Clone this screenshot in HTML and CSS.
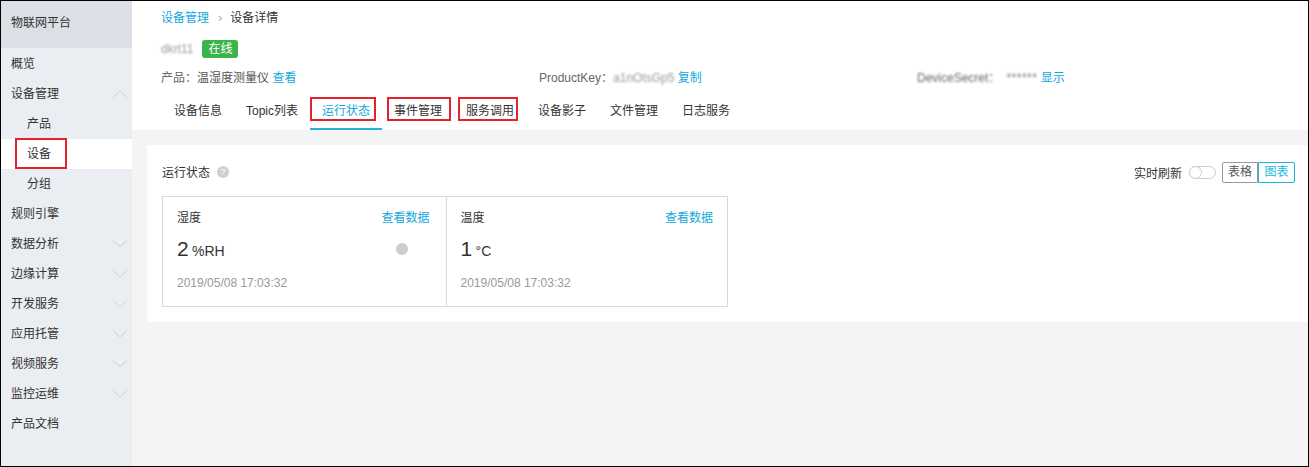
FILE: index.html
```html
<!DOCTYPE html>
<html lang="zh">
<head>
<meta charset="utf-8">
<title>设备详情</title>
<link rel="stylesheet" href="styles.css">
</head>
<body>
<aside class="sidebar">
  <div class="side-head">物联网平台</div>
  <ul class="menu">
    <li class="item">概览</li>
    <li class="item">设备管理<svg class="chev" viewBox="0 0 16 8"><polyline points="1,7.5 8,1 15,7.5"/></svg></li>
    <li class="item sub">产品</li>
    <li class="item sub active">设备<span class="mark mark-side"></span></li>
    <li class="item sub">分组</li>
    <li class="item">规则引擎</li>
    <li class="item">数据分析<svg class="chev" viewBox="0 0 16 8"><polyline points="1,0.5 8,7 15,0.5"/></svg></li>
    <li class="item">边缘计算<svg class="chev" viewBox="0 0 16 8"><polyline points="1,0.5 8,7 15,0.5"/></svg></li>
    <li class="item">开发服务<svg class="chev" viewBox="0 0 16 8"><polyline points="1,0.5 8,7 15,0.5"/></svg></li>
    <li class="item">应用托管<svg class="chev" viewBox="0 0 16 8"><polyline points="1,0.5 8,7 15,0.5"/></svg></li>
    <li class="item">视频服务<svg class="chev" viewBox="0 0 16 8"><polyline points="1,0.5 8,7 15,0.5"/></svg></li>
    <li class="item">监控运维<svg class="chev" viewBox="0 0 16 8"><polyline points="1,0.5 8,7 15,0.5"/></svg></li>
    <li class="item">产品文档</li>
  </ul>
</aside>
<main class="main">
  <header class="head">
    <div class="crumb"><span class="link">设备管理</span><span class="sep">›</span><span>设备详情</span></div>
    <div class="name-row"><span class="blur name">dkrt11</span><span class="badge">在线</span></div>
    <div class="info-row">
      <div><span class="label">产品：</span><span class="val">温湿度测量仪</span> <span class="link">查看</span></div>
      <div><span class="label">ProductKey：</span><span class="blur val">a1nOtsGp5</span> <span class="link">复制</span></div>
      <div><span class="blur label">DeviceSecret：</span><span class="blur stars">******</span> <span class="link">显示</span></div>
    </div>
    <nav class="tabs">
      <span class="tab">设备信息</span>
      <span class="tab">Topic列表</span>
      <span class="tab active">运行状态<span class="mark m1"></span></span>
      <span class="tab">事件管理<span class="mark m2"></span></span>
      <span class="tab">服务调用<span class="mark m3"></span></span>
      <span class="tab">设备影子</span>
      <span class="tab">文件管理</span>
      <span class="tab">日志服务</span>
    </nav>
  </header>
  <section class="content">
    <div class="card">
      <div class="card-top">
        <div class="card-title">运行状态<span class="help">?</span></div>
        <div class="tools">
          <span>实时刷新</span>
          <span class="switch"><span class="knob"></span></span>
          <span class="btns"><span class="btn">表格</span><span class="btn on">图表</span></span>
        </div>
      </div>
      <div class="props">
        <div class="prop">
          <div class="prop-head"><span>湿度</span><span class="link">查看数据</span></div>
          <div class="prop-val"><span><span class="num">2</span> <span class="unit">%RH</span></span><span class="dot"></span></div>
          <div class="time">2019/05/08 17:03:32</div>
        </div>
        <div class="prop">
          <div class="prop-head"><span>温度</span><span class="link">查看数据</span></div>
          <div class="prop-val"><span><span class="num">1</span> <span class="unit">°C</span></span></div>
          <div class="time">2019/05/08 17:03:32</div>
        </div>
      </div>
    </div>
  </section>
</main>
</body>
</html>
```

FILE: styles.css
```css
* { box-sizing: border-box; }
html, body { margin: 0; padding: 0; }
body {
  width: 1309px;
  height: 467px;
  border: 1px solid #000;
  display: flex;
  overflow: hidden;
  font-family: "Liberation Sans", "Noto Sans CJK SC", sans-serif;
  font-size: 12px;
  color: #333;
  background: #f4f4f4;
}
.link { color: #12a8de; }

.sidebar {
  width: 131px;
  flex: none;
  background: #eaedf1;
}
.side-head {
  height: 47px;
  background: #dcdfe5;
  padding-left: 10px;
  line-height: 44px;
  color: #333;
}
.menu { list-style: none; margin: 0; padding: 1px 0 0; }
.item {
  position: relative;
  height: 30px;
  line-height: 30px;
  padding-left: 10px;
  display: flex;
  align-items: center;
  justify-content: space-between;
  padding-right: 4px;
}
.item.sub { padding-left: 26px; }
.item.active { background: #fff; }
.chev {
  width: 16px;
  height: 8px;
  fill: none;
  stroke: #cdd0d6;
  stroke-width: 1;
}
.mark {
  position: absolute;
  border: 2px solid #e3232b;
  pointer-events: none;
}
.mark-side { left: 14px; top: -1px; width: 52px; height: 31px; }

.main { flex: 1; display: flex; flex-direction: column; min-width: 0; }
.head {
  background: #fff;
  padding: 8px 0 0 29px;
}
.crumb { line-height: 18px; display: flex; align-items: center; }
.sep { color: #aaa; margin: 0 8px 0 9px; font-size: 13px; }
.name-row {
  margin-top: 13px;
  height: 18px;
  display: flex;
  align-items: center;
  gap: 9px;
}
.blur { display: inline-block; filter: blur(1.2px); color: #999; }
.name { font-size: 12px; }
.badge {
  background: #3bb44b;
  color: #fff;
  height: 18px;
  line-height: 18px;
  padding: 0 6px;
  border-radius: 3px;
}
.info-row {
  margin-top: 11px;
  line-height: 18px;
  display: grid;
  grid-template-columns: 378px 378px 1fr;
}
.label { color: #666; }
.val { color: #555; }
.blur.val { color: #999; }
.stars { color: #777; margin-left: 6px; letter-spacing: 0.5px; }

.tabs {
  margin-top: 5px;
  margin-left: 1px;
  display: flex;
}
.tab {
  position: relative;
  padding: 10px 12px 8px;
  line-height: 18px;
  border-bottom: 2px solid transparent;
  color: #333;
}
.tab.active { color: #12a8de; border-bottom-color: #29b1d6; }
.m1 { left: 0; top: 5px; width: 66px; height: 24px; }
.m2 { left: 5px; top: 5px; width: 64px; height: 24px; }
.m3 { left: 4px; top: 5px; width: 60px; height: 24px; }

.content { padding: 15px 0 0 15px; }
.card {
  background: #fff;
  padding: 17px 13px 15px 15px;
}
.card-top {
  display: flex;
  justify-content: space-between;
  align-items: center;
  height: 21px;
}
.card-title { display: flex; align-items: center; color: #333; margin-top: -2px; }
.help {
  width: 12px;
  height: 12px;
  border-radius: 50%;
  background: #cfcfcf;
  color: #fff;
  font-size: 9px;
  line-height: 12px;
  text-align: center;
  margin-left: 7px;
}
.tools { display: flex; align-items: center; }
.switch {
  width: 27px;
  height: 13px;
  border: 1px solid #ccc;
  border-radius: 7px;
  margin: 0 6px 0 7px;
  position: relative;
}
.knob {
  position: absolute;
  left: -1px;
  top: -1px;
  width: 13px;
  height: 13px;
  border-radius: 50%;
  border: 1px solid #ccc;
  background: #fff;
}
.btns { display: flex; }
.btn {
  height: 21px;
  line-height: 19px;
  width: 36px;
  text-align: center;
  border: 1px solid #999;
  color: #555;
}
.btn:first-child { border-radius: 2px 0 0 2px; }
.btn.on {
  border-color: #16b7dc;
  color: #16b7dc;
  width: 37px;
  border-radius: 0 2px 2px 0;
}

.props {
  margin-top: 13px;
  width: 566px;
  border: 1px solid #d9d9d9;
  display: flex;
}
.prop {
  width: 283px;
  padding: 12px 16px 14px 14px;
}
.prop + .prop { border-left: 1px solid #d9d9d9; width: 282px; padding-right: 14px; }
.prop-head {
  display: flex;
  justify-content: space-between;
  line-height: 18px;
}
.prop-val {
  margin-top: 8px;
  height: 28px;
  display: flex;
  align-items: center;
  justify-content: space-between;
}
.num { font-size: 21px; color: #333; }
.unit { font-size: 14px; color: #333; }
.dot {
  width: 12px;
  height: 12px;
  border-radius: 50%;
  background: #cdcdcd;
  margin-right: 22px;
}
.time {
  margin-top: 11px;
  line-height: 18px;
  color: #999;
}
```
